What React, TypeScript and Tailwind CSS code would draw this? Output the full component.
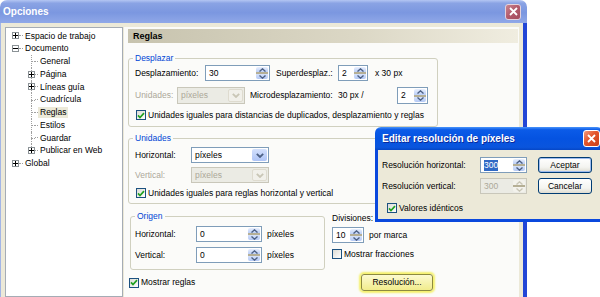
import React from "react";

type TreeItem = {
  label: string;
  level: 0 | 1;
  exp?: "+" | "-";
  selected?: boolean;
  last?: boolean;
};

const tree: TreeItem[] = [
  { label: "Espacio de trabajo", level: 0, exp: "+" },
  { label: "Documento", level: 0, exp: "-" },
  { label: "General", level: 1 },
  { label: "Página", level: 1, exp: "+" },
  { label: "Líneas guía", level: 1, exp: "+" },
  { label: "Cuadrícula", level: 1 },
  { label: "Reglas", level: 1, selected: true },
  { label: "Estilos", level: 1 },
  { label: "Guardar", level: 1 },
  { label: "Publicar en Web", level: 1, exp: "+", last: true },
  { label: "Global", level: 0, exp: "+" },
];

const Arrow = ({ up, color = "#4d6185" }: { up?: boolean; color?: string }) => (
  <svg width="7" height="4" viewBox="0 0 7 4">
    <path
      d={up ? "M0.5 3.6 L3.5 0.8 L6.5 3.6" : "M0.5 0.4 L3.5 3.2 L6.5 0.4"}
      fill="none"
      stroke={color}
      strokeWidth="1.3"
    />
  </svg>
);

const Spin = ({
  value,
  className,
  disabled,
  selected,
}: {
  value: string;
  className: string;
  disabled?: boolean;
  selected?: boolean;
}) => (
  <div
    className={`flex shrink-0 border ${
      disabled ? "border-[#c9c7ba] bg-[#ebebe4] text-[#aca899]" : "border-[#7f9db9] bg-white"
    } ${className}`}
  >
    <div className="flex flex-1 items-center pl-[3px]">
      {selected ? (
        <span className="bg-[#316ac5] leading-[11px] text-white">{value}</span>
      ) : (
        value
      )}
    </div>
    <div className="flex w-[13px] flex-col py-px pr-px">
      <div
        className={`flex flex-1 items-center justify-center rounded-t-[2px] ${
          disabled ? "bg-[#f3f2ec]" : "bg-linear-to-b from-[#e8effd] to-[#bccff7]"
        }`}
      >
        <Arrow up color={disabled ? "#c9c6b6" : "#4d6185"} />
      </div>
      <div className="h-[2px] bg-[#b5af95]" />
      <div
        className={`flex flex-1 items-center justify-center rounded-b-[2px] ${
          disabled ? "bg-[#f3f2ec]" : "bg-linear-to-b from-[#d6e2fb] to-[#b4c9f5]"
        }`}
      >
        <Arrow color={disabled ? "#c9c6b6" : "#4d6185"} />
      </div>
    </div>
  </div>
);

const Select = ({
  value,
  className,
  disabled,
}: {
  value: string;
  className: string;
  disabled?: boolean;
}) => (
  <div
    className={`flex shrink-0 border ${
      disabled ? "border-[#c9c7ba] bg-[#ebebe4] text-[#aca899]" : "border-[#7f9db9] bg-white"
    } ${className}`}
  >
    <div className="flex flex-1 items-center pl-[3px]">{value}</div>
    <div
      className={`m-px flex w-[15px] items-center justify-center rounded-[2px] ${
        disabled
          ? "border border-[#dedbcf] bg-[#f1f0ea]"
          : "bg-linear-to-b from-[#d3e0fc] to-[#aec4f6]"
      }`}
    >
      <svg width="8" height="5" viewBox="0 0 8 5">
        <path
          d="M0.8 0.8 L4 4 L7.2 0.8"
          fill="none"
          stroke={disabled ? "#c9c6b6" : "#4d6185"}
          strokeWidth="1.8"
        />
      </svg>
    </div>
  </div>
);

const Checkbox = ({ checked }: { checked?: boolean }) => (
  <div className="flex h-[10px] w-[10px] shrink-0 items-center justify-center border border-[#1c5180] bg-linear-to-br from-[#dcdcd6] to-white">
    {checked && (
      <svg width="8" height="7" viewBox="0 0 8 7">
        <path d="M1 3.4 L3 5.5 L7 1.2" fill="none" stroke="#21a121" strokeWidth="1.7" />
      </svg>
    )}
  </div>
);

const Expander = ({ plus }: { plus: boolean }) => (
  <div className="relative z-10 flex h-[7px] w-[7px] shrink-0 items-center justify-center border border-[#8b9296] bg-white">
    <svg width="5" height="5" viewBox="0 0 5 5">
      <path d="M0 2.5H5" stroke="#000" strokeWidth="1" />
      {plus && <path d="M2.5 0V5" stroke="#000" strokeWidth="1" />}
    </svg>
  </div>
);

const CloseBtn = ({ active }: { active?: boolean }) => (
  <div
    className={`flex items-center justify-center rounded-[3px] border ${
      active
        ? "h-[17px] w-[17px] border-white bg-[linear-gradient(135deg,#f39a7c,#e3542a_45%,#c8401a)]"
        : "h-[16px] w-[16px] border-[#e4d2dc] bg-[linear-gradient(135deg,#c98591,#b25a6b_50%,#a34c5d)]"
    }`}
  >
    <svg width="9" height="9" viewBox="0 0 9 9">
      <path d="M1 1L8 8M8 1L1 8" stroke="#fff" strokeWidth="1.8" />
    </svg>
  </div>
);

const XpButton = ({ label, focused }: { label: string; focused?: boolean }) => (
  <button
    className={`flex h-[16px] w-[54px] items-center justify-center rounded-[3px] border border-[#003c74] bg-[linear-gradient(to_bottom,#ffffff,#f4f4f0_65%,#dedcd1)] ${
      focused ? "shadow-[inset_0_0_0_1px_#9ebcee]" : ""
    }`}
  >
    {label}
  </button>
);

const Tree = () => (
  <div className="w-[118px] shrink-0 border border-[#a5acb5] bg-white pt-[1.5px]">
    {tree.map((item) =>
      item.level === 0 ? (
        <div key={item.label} className="flex h-[12.75px] items-center pl-[6px]">
          <Expander plus={item.exp === "+"} />
          <div className="w-[4px] border-t border-dotted border-[#a0a0a0]" />
          <span className="px-[2px]">{item.label}</span>
        </div>
      ) : (
        <div key={item.label} className="flex h-[12.75px] items-center pl-[22px]">
          <div className="relative flex h-full w-[7px] shrink-0 items-center justify-center">
            <div
              className={`absolute left-[3px] top-0 border-l border-dotted border-[#a0a0a0] ${
                item.last ? "h-1/2" : "h-full"
              }`}
            />
            {item.exp ? (
              <Expander plus />
            ) : (
              <div className="absolute left-[3px] right-0 top-1/2 border-t border-dotted border-[#a0a0a0]" />
            )}
          </div>
          <div className="w-[3px] border-t border-dotted border-[#a0a0a0]" />
          <span className={`px-[2px] py-px ${item.selected ? "bg-[#ece9d8]" : ""}`}>
            {item.label}
          </span>
        </div>
      )
    )}
  </div>
);

const App = () => {
  return (
    <div className="relative flex h-[297px] w-[600px] overflow-hidden bg-white font-['Liberation_Sans',Arial,sans-serif] text-[8.5px] leading-none text-black">
      {/* main window */}
      <div className="flex w-[527px] shrink-0 flex-col">
        <div className="flex h-[23px] items-center justify-between rounded-t-[7px] bg-[linear-gradient(to_bottom,#b4c6f3_0%,#8aa3e4_14%,#7b97e0_55%,#90a8e8_100%)] pl-[3px] pr-[6px]">
          <span className="text-[10px] font-bold text-white">Opciones</span>
          <CloseBtn />
        </div>
        <div className="flex flex-1 border-l border-r-[4px] border-l-[#a3b5e6] border-r-[#2246d6] bg-[#ece9d8] pl-[4px] pr-[4px] pt-[4px]">
          <Tree />
          <div className="ml-px w-[395px] bg-[#fbfbf9] pl-[4px] pr-px pt-[2px]">
            <div className="flex h-[14px] items-center bg-[linear-gradient(to_right,#c7c3ae,#dcd8c6_60%,#f0ede0)] pl-[5px] text-[9px] font-bold">
              Reglas
            </div>

            {/* Desplazar */}
            <fieldset className="mt-[9.5px] w-[310px] rounded-[3px] border border-[#d0d0bf] px-[6px] pb-[5px] pt-[1.5px]">
              <legend className="ml-[-2px] px-[2px] leading-[11px] text-[#0046d5]">Desplazar</legend>
              <div className="flex h-[16px] items-center">
                <span className="w-[70px]">Desplazamiento:</span>
                <Spin value="30" className="h-[16px] w-[65px]" />
                <span className="ml-[6px] w-[62px]">Superdesplaz.:</span>
                <Spin value="2" className="h-[16px] w-[30px]" />
                <span className="ml-[7px]">x 30 px</span>
              </div>
              <div className="mt-[6px] flex h-[17px] items-center">
                <span className="w-[42px] text-[#aca899]">Unidades:</span>
                <Select disabled value="píxeles" className="h-[17px] w-[68px]" />
                <span className="ml-[5px] w-[88px]">Microdesplazamiento:</span>
                <span className="w-[59px]">30 px /</span>
                <Spin value="2" className="h-[17px] w-[31px]" />
              </div>
              <div className="mt-[5px] flex h-[12px] items-center pl-px">
                <Checkbox checked />
                <span className="ml-[2px]">
                  Unidades iguales para distancias de duplicados, desplazamiento y reglas
                </span>
              </div>
            </fieldset>

            {/* Unidades */}
            <fieldset className="mt-[5.5px] w-[310px] rounded-[3px] border border-[#d0d0bf] px-[6px] pb-[4px] pt-[3.5px]">
              <legend className="ml-[-2px] px-[2px] leading-[11px] text-[#0046d5]">Unidades</legend>
              <div className="flex h-[16px] items-center">
                <span className="w-[56px]">Horizontal:</span>
                <Select value="píxeles" className="h-[16px] w-[78px]" />
              </div>
              <div className="mt-[4px] flex h-[16px] items-center">
                <span className="w-[56px] text-[#aca899]">Vertical:</span>
                <Select disabled value="píxeles" className="h-[16px] w-[78px]" />
              </div>
              <div className="mt-[4px] flex h-[12px] items-center pl-px">
                <Checkbox checked />
                <span className="ml-[2px]">Unidades iguales para reglas horizontal y vertical</span>
              </div>
            </fieldset>

            {/* Origen + Divisiones */}
            <div className="mt-[6.5px] flex items-start">
              <fieldset className="ml-[2px] w-[195px] rounded-[3px] border border-[#d0d0bf] px-[4px] pb-[6px] pt-[4.5px]">
                <legend className="px-[2px] leading-[11px] text-[#0046d5]">Origen</legend>
                <div className="flex h-[16px] items-center">
                  <span className="w-[61px]">Horizontal:</span>
                  <Spin value="0" className="h-[16px] w-[66px]" />
                  <span className="ml-[5px]">píxeles</span>
                </div>
                <div className="mt-[5px] flex h-[16px] items-center">
                  <span className="w-[61px]">Vertical:</span>
                  <Spin value="0" className="h-[16px] w-[66px]" />
                  <span className="ml-[5px]">píxeles</span>
                </div>
              </fieldset>
              <div className="ml-[7px] pt-[2px]">
                <div className="leading-[11px]">Divisiones:</div>
                <div className="mt-[3.5px] flex h-[16px] items-center">
                  <Spin value="10" className="h-[16px] w-[32px]" />
                  <span className="ml-[5px]">por marca</span>
                </div>
                <div className="mt-[5px] flex h-[12px] items-center">
                  <Checkbox />
                  <span className="ml-[2px]">Mostrar fracciones</span>
                </div>
              </div>
            </div>

            <div className="mt-[4px] flex h-[17px] items-center">
              <div className="flex w-[233px] items-center pl-px">
                <Checkbox checked />
                <span className="ml-[2px]">Mostrar reglas</span>
              </div>
              <button className="flex h-[17px] w-[72px] items-center justify-center rounded-[3px] border border-[#8c8a40] bg-[linear-gradient(to_bottom,#fcfad0,#f1ec8c)] shadow-[0_0_2px_2px_#f5f16a]">
                Resolución...
              </button>
            </div>
          </div>
        </div>
      </div>

      {/* dialog */}
      <div className="absolute left-[375px] top-[127px] w-[228px]">
        <div className="flex h-[23px] items-center justify-between rounded-t-[6px] bg-[linear-gradient(to_bottom,#4a94fa,#0b5be8_12%,#0553e1_50%,#0a55dd_88%,#0546c6)] pl-[7px] pr-[3px]">
          <span className="text-[10px] font-bold text-white [text-shadow:1px_1px_0_#0a2a9a]">
            Editar resolución de píxeles
          </span>
          <CloseBtn active />
        </div>
        <div className="flex border-x-[3px] border-b-[3px] border-[#0a48dd] bg-[#ece9d8] pb-[5px] pl-[4px] pt-[7px]">
          <div>
            <div className="flex h-[16px] items-center">
              <span className="w-[98px]">Resolución horizontal:</span>
              <Spin value="300" selected className="h-[16px] w-[47px]" />
            </div>
            <div className="mt-[5px] flex h-[16px] items-center">
              <span className="w-[98px]">Resolución vertical:</span>
              <Spin value="300" disabled className="h-[16px] w-[47px]" />
            </div>
            <div className="mt-[8px] flex h-[12px] items-center pl-[5px]">
              <Checkbox checked />
              <span className="ml-[2px]">Valores idénticos</span>
            </div>
          </div>
          <div className="ml-[11px] flex flex-col gap-[5px]">
            <XpButton label="Aceptar" focused />
            <XpButton label="Cancelar" />
          </div>
        </div>
      </div>
    </div>
  );
};

export default App;
